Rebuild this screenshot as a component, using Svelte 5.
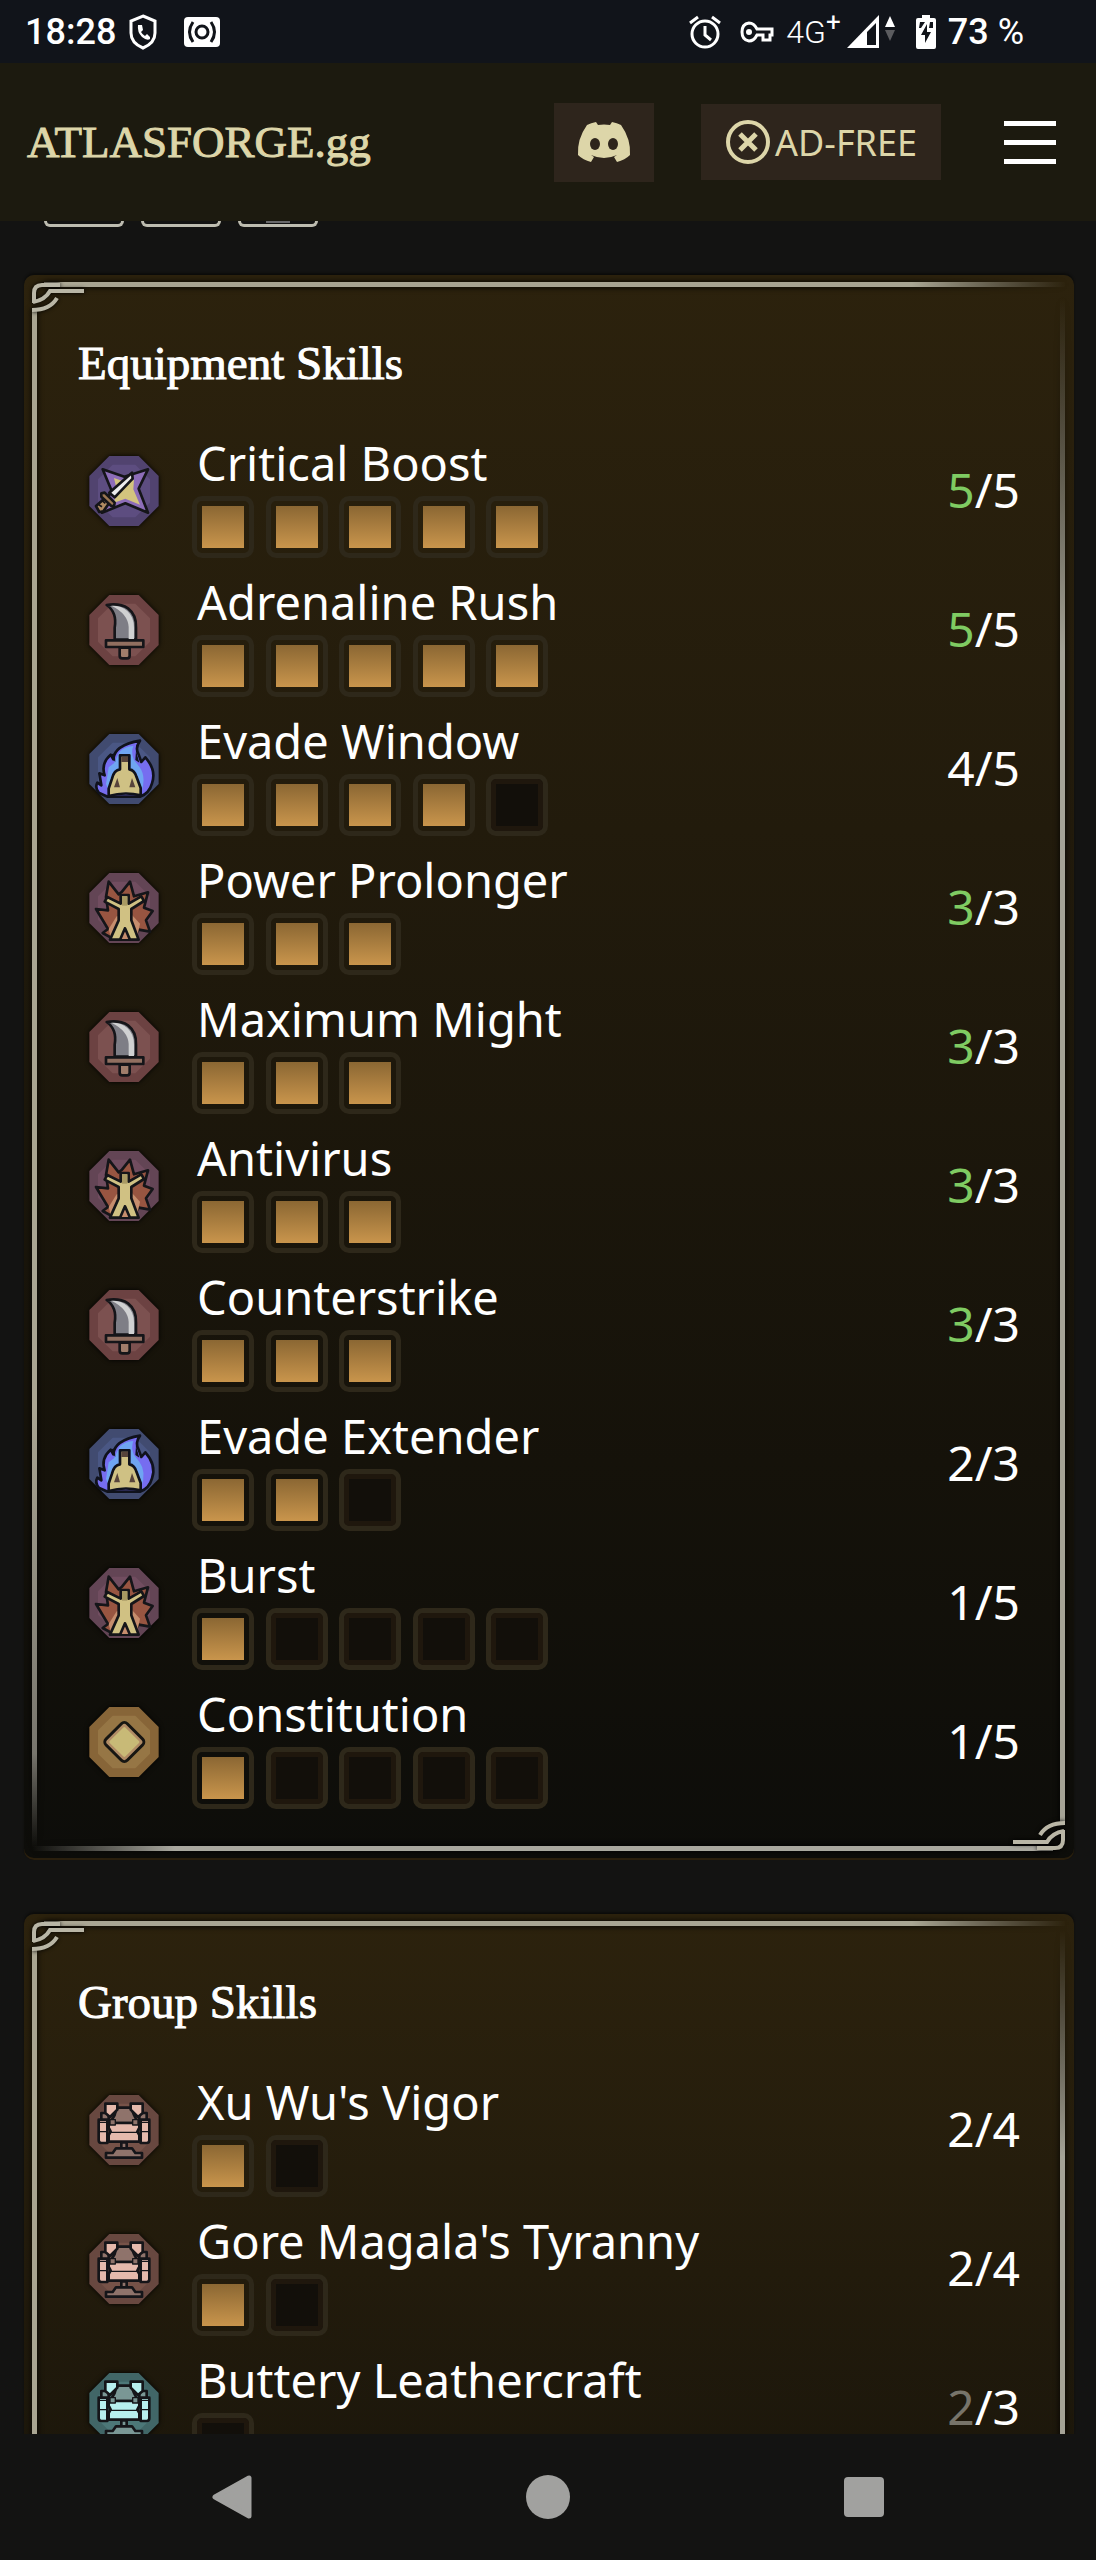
<script lang="ts">
  type Kind = 'crit' | 'blade' | 'evade' | 'power' | 'basic' | 'armor' | 'armor-teal';
  type Skill = { name: string; kind: Kind; level: number; max: number; pips: number; filled: number; dim?: boolean };

  const equipment: Skill[] = [
    { name: 'Critical Boost', kind: 'crit', level: 5, max: 5, pips: 5, filled: 5 },
    { name: 'Adrenaline Rush', kind: 'blade', level: 5, max: 5, pips: 5, filled: 5 },
    { name: 'Evade Window', kind: 'evade', level: 4, max: 5, pips: 5, filled: 4 },
    { name: 'Power Prolonger', kind: 'power', level: 3, max: 3, pips: 3, filled: 3 },
    { name: 'Maximum Might', kind: 'blade', level: 3, max: 3, pips: 3, filled: 3 },
    { name: 'Antivirus', kind: 'power', level: 3, max: 3, pips: 3, filled: 3 },
    { name: 'Counterstrike', kind: 'blade', level: 3, max: 3, pips: 3, filled: 3 },
    { name: 'Evade Extender', kind: 'evade', level: 2, max: 3, pips: 3, filled: 2 },
    { name: 'Burst', kind: 'power', level: 1, max: 5, pips: 5, filled: 1 },
    { name: 'Constitution', kind: 'basic', level: 1, max: 5, pips: 5, filled: 1 },
  ];

  // group skills light one pip per completed tier, not per piece
  const group: Skill[] = [
    { name: "Xu Wu's Vigor", kind: 'armor', level: 2, max: 4, pips: 2, filled: 1 },
    { name: "Gore Magala's Tyranny", kind: 'armor', level: 2, max: 4, pips: 2, filled: 1 },
    { name: 'Buttery Leathercraft', kind: 'armor-teal', level: 2, max: 3, pips: 1, filled: 0, dim: true },
  ];

  const plates: Record<Kind, [string, string]> = {
    crit: ['#51436f', '#5d4d80'],
    blade: ['#6c4242', '#7c5150'],
    evade: ['#414b70', '#4a5784'],
    power: ['#634555', '#714d60'],
    basic: ['#876538', '#967645'],
    armor: ['#684840', '#765248'],
    'armor-teal': ['#416667', '#4c7778'],
  };
</script>

{#snippet armor(light: string, mid: string)}
  <g stroke="#151519" stroke-width="8" stroke-linejoin="round">
    <path d="M82 38H126L134 60L146 84H62L76 60Z" fill={mid} />
    <path d="M36 54H58V78H36ZM150 54H172V78H150Z" fill={mid} />
    <path d="M48 26H84V44L62 66L48 54ZM160 26H124V44L146 66L160 54Z" fill={light} />
    <path d="M28 74H54V144H36Q28 144 28 136ZM180 74H154V144H172Q180 144 180 136Z" fill={light} />
    <path d="M58 84H150V98L144 110L150 120V140H58V120L64 110L58 98Z" fill={light} />
    <path d="M28 82H52M156 82H180M28 110H52M156 110H180M60 112H148" fill="none" stroke-width="4" />
    <path d="M62 74H78V90H62ZM130 74H146V90H130Z" fill={mid} stroke-width="4" />
    <path d="M96 142H112V164H96Z" fill={mid} />
    <path d="M50 188V174H70L80 160H128L138 174H158V188Z" fill={mid} />
  </g>
{/snippet}

{#snippet skillIcon(kind: Kind)}
  <svg class="icon" viewBox="-34 -33 276 276" aria-hidden="true">
    <path class="plate" d="M60 0H148L208 60V150L148 210H60L0 150V60Z" fill={plates[kind][0]} />
    <path d="M70 26H138L182 70V140L138 184H70L26 140V70Z" fill={plates[kind][1]} />
    {#if kind === 'crit'}
      <g stroke="#151519" stroke-width="8" stroke-linejoin="round">
        <path d="M40 40L105 62L176 40L148 98L176 170L108 142L38 170L66 102Z" fill="#8d6db8" />
        <path d="M74 66L108 78L134 72L132 100L152 146L108 128L74 140L82 100Z" fill="#d3c47e" stroke="none" />
        <path d="M128 50L130 68L76 124L60 110Z" fill="#ececec" />
        <path d="M54 120L66 132L42 166L30 168L20 150Z" fill="#b08b62" />
        <path d="M36 112L46 110L76 140L74 150L66 150L36 122Z" fill="#9b7652" />
        <path d="M28 146L38 152M38 134L48 142" fill="none" stroke-width="5" />
      </g>
    {:else if kind === 'blade'}
      <g stroke="#151519" stroke-width="8" stroke-linejoin="round">
        <path d="M52 30Q92 24 116 40Q142 60 140 98V134H76V98Q84 52 52 30Z" fill="#7e7e86" />
        <path d="M66 32Q98 32 114 48Q134 66 134 98V132H118V96Q116 56 66 32Z" fill="#d0d1d2" stroke="none" />
        <path d="M50 136H162V156H50Z" fill="#916f60" />
        <path d="M91 158H121V182Q121 190 113 190H99Q91 190 91 182Z" fill="#a07d6b" />
      </g>
    {:else if kind === 'evade'}
      <g stroke="#10121c" stroke-width="8" stroke-linejoin="round">
        <path d="M55 188L28 176Q16 160 24 146L36 154L30 118L46 124Q34 88 64 62L72 76Q74 34 152 20Q136 42 148 62L156 84L168 70Q202 108 188 148Q180 178 152 188Z" fill="#766df0" />
        <path d="M60 174L50 150L58 100L74 88L90 54Q106 38 132 36Q124 56 134 78L150 98Q172 128 156 174Z" fill="#6fa5f2" stroke="none" />
        <path d="M62 62L76 58L78 84ZM140 50L150 86L138 78Z" fill="#10121c" stroke="none" />
        <path d="M92 64H120V106Q136 108 142 130L154 162V184Q106 172 58 186V164L68 134Q74 108 92 106Z" fill="#cfc184" />
        <path d="M96 68H116V84H96ZM84 132L74 160H92ZM128 132L138 160H120Z" fill="#57443b" stroke="none" />
      </g>
    {:else if kind === 'power'}
      <g stroke="#151519" stroke-width="8" stroke-linejoin="round">
        <path d="M58 26L88 64L98 56L122 26L134 70L176 58L164 104L190 114L170 142L182 176L148 170L130 200H76L40 180L56 168L20 108L56 112L50 72Z" fill="#985541" />
        <path d="M66 198L58 168L82 130L128 126L152 152L142 198Z" fill="#c68d6d" stroke="none" />
        <path d="M94 66H118V92L156 70L164 84L126 108V142L148 200H122L107 166L92 200H62L88 142V108L46 86L54 72L94 92Z" fill="#d0c183" />
        <path d="M98 70H114V98H98Z" fill="#a99a63" stroke="none" />
      </g>
    {:else if kind === 'basic'}
      <path d="M105 59L151 105L105 151L59 105Z" fill="#83633f" stroke="#171612" stroke-width="34" stroke-linejoin="round" />
      <path d="M105 60L150 105L105 150L60 105Z" fill="#c8ba77" stroke="#b08b65" stroke-width="18" stroke-linejoin="round" />
      <path d="M105 64L146 105L105 146L64 105Z" fill="#c8ba77" stroke="#c8ba77" stroke-width="8" stroke-linejoin="round" />
    {:else if kind === 'armor'}
      {@render armor('#e5b9ac', '#8f736b')}
    {:else}
      {@render armor('#b7efee', '#7a9795')}
    {/if}
  </svg>
{/snippet}

{#snippet corner(pos: string)}
  <svg class="corner {pos}" viewBox="0 0 54 32" aria-hidden="true">
    <path d="M2 21V11Q2 3 10 3H28M1 20Q13 18 18 9H52M0 28Q18 28 25 16" fill="none" stroke="#b9b6a6" stroke-width="4" />
  </svg>
{/snippet}

{#snippet card(title: string, skills: Skill[], open: boolean)}
  <section class="card" class:open>
    {@render corner('tl')}
    {@render corner('br')}
    <h2>{title}</h2>
    <ul>
      {#each skills as s}
        <li>
          {@render skillIcon(s.kind)}
          <div class="body">
            <div class="name">{s.name}</div>
            <div class="pips">
              {#each Array(s.pips) as _, i}
                <span class="pip" class:on={i < s.filled}></span>
              {/each}
            </div>
          </div>
          <div class="score"><span class:full={s.level === s.max} class:dim={s.dim}>{s.level}</span>/{s.max}</div>
        </li>
      {/each}
    </ul>
  </section>
{/snippet}

<div class="screen">
  <div class="status">
    <div class="side">
      <span class="clock">18:28</span>
      <svg class="shield" width="28" height="36" viewBox="0 0 28 36">
        <path d="M14 2L26 7V19Q26 29 14 34Q2 29 2 19V7Z" fill="none" stroke="#fff" stroke-width="3" />
        <path d="M9 11L13 11L14 16L12 18Q13 20 16 22L18 20L21 23V25Q18 27 13 23Q8 18 9 11Z" fill="#fff" />
      </svg>
      <svg width="36" height="30" viewBox="0 0 36 30">
        <rect width="36" height="30" rx="4" fill="#fff" />
        <g fill="none" stroke="#11141a" stroke-width="3">
          <circle cx="18" cy="15" r="6" />
          <path d="M9 5Q2 15 9 25M27 5Q34 15 27 25" />
        </g>
      </svg>
    </div>
    <div class="side right">
      <svg class="alarm" width="32" height="34" viewBox="0 0 32 34">
        <g fill="none" stroke="#fff" stroke-width="3">
          <circle cx="16" cy="19" r="13" />
          <path d="M1 8L9 2M31 8L23 2M16 11V20L22 25" />
        </g>
      </svg>
      <svg class="key" width="34" height="22" viewBox="0 0 34 22">
        <path d="M17 8H32V14H30V19H23V14H17Q14 20 9 20Q2 19 2 11Q2 3 9 2Q14 2 17 8Z" fill="none" stroke="#fff" stroke-width="3" />
        <circle cx="9" cy="11" r="3" fill="#fff" />
      </svg>
      <span class="net">4G<sup>+</sup></span>
      <svg class="signal" width="50" height="34" viewBox="0 0 50 34">
        <path d="M0 33L32 0V33Z" fill="#fff" />
        <path d="M20 17L29 8V30H20Z" fill="#11141a" />
        <path d="M38 12L43 1L48 12Z" fill="#fff" />
        <path d="M38 15L43 26L48 15Z" fill="#5b5c5f" />
      </svg>
      <svg class="battery" width="20" height="34" viewBox="0 0 20 34">
        <path d="M6 0H14V3H18Q20 3 20 5V32Q20 34 18 34H2Q0 34 0 32V5Q0 3 2 3H6Z" fill="#fff" />
        <path d="M4 7H9L5 13H3ZM14 7H17V13H13Z M11 9L5 20H9V28L15 17H11Z" fill="#11141a" />
      </svg>
      <span class="clock">73 <span class="pct">%</span></span>
    </div>
  </div>

  <header>
    <a class="brand" href="/">ATLASFORGE.gg</a>
    <nav>
      <a class="chip discord" href="/discord" aria-label="Discord">
        <svg width="54" height="42" viewBox="0 0 54 42">
          <path d="M10 4Q14 2 19 1L21 4Q27 3 33 4L35 1Q40 2 44 4Q54 18 53 34Q48 39 40 41L37 36L40 34Q27 40 14 34L17 36L14 41Q6 39 1 34Q0 18 10 4Z" fill="#ddd6a9" />
          <ellipse cx="18" cy="23" rx="5" ry="6" fill="#2e251c" />
          <ellipse cx="36" cy="23" rx="5" ry="6" fill="#2e251c" />
        </svg>
      </a>
      <a class="chip adfree" href="/ad-free">
        <svg width="44" height="44" viewBox="0 0 44 44">
          <circle cx="22" cy="22" r="20" fill="none" stroke="#ddd6a9" stroke-width="4" />
          <path d="M14 14L30 30M30 14L14 30" stroke="#ddd6a9" stroke-width="5" />
        </svg>
        AD-FREE
      </a>
      <button class="menu" aria-label="Menu"><i></i><i></i><i></i></button>
    </nav>
  </header>

  <main>
    <div class="slots">
      <span class="slot"></span>
      <span class="slot"></span>
      <span class="slot"><i></i></span>
    </div>
    {@render card('Equipment Skills', equipment, false)}
    {@render card('Group Skills', group, true)}
  </main>

  <footer>
    <button aria-label="Back">
      <svg width="46" height="46" viewBox="0 0 46 46"><path d="M40 4V42L6 23Z" fill="#a1a19f" stroke="#a1a19f" stroke-width="5" stroke-linejoin="round" /></svg>
    </button>
    <button aria-label="Home">
      <svg width="46" height="46" viewBox="0 0 46 46"><circle cx="23" cy="23" r="22" fill="#a1a19f" /></svg>
    </button>
    <button aria-label="Recents">
      <svg width="46" height="46" viewBox="0 0 46 46"><rect x="3" y="3" width="40" height="40" rx="4" fill="#a1a19f" /></svg>
    </button>
  </footer>
</div>

<style>
  :global(body) { margin: 0; background: #131312; }
  .screen { display: flex; flex-direction: column; height: 100vh; overflow: hidden; background: #131312; color: #fff; font-family: 'Noto Sans', sans-serif; }
  svg { display: block; flex: none; }
  button { background: none; border: 0; padding: 0; cursor: pointer; }

  .status { flex: none; display: flex; justify-content: space-between; align-items: center; height: 63px; padding: 0 72px 0 25px; background: #11141a; font-family: Roboto, sans-serif; }
  .side { display: flex; align-items: center; }
  .clock { font-size: 36px; font-weight: 500; line-height: 42px; white-space: pre; }
  .pct { font-weight: 400; }
  .shield { margin: 0 27px 0 13px; }
  .alarm { margin-right: 19px; }
  .key { margin-right: 12px; }
  .net { font-size: 32px; font-weight: 300; line-height: 36px; }
  .net sup { font-size: 26px; font-weight: 400; line-height: 0; }
  .signal { margin: 0 19px 0 6px; }
  .battery { margin-right: 12px; }

  header { flex: none; display: flex; justify-content: space-between; align-items: center; height: 158px; padding: 0 40px 0 27px; background: #1c1a0f; }
  .brand { font: 45px 'Liberation Serif', serif; color: #ddd6a9; text-decoration: none; -webkit-text-stroke: 1px; }
  nav { display: flex; align-items: center; }
  .chip { display: flex; align-items: center; justify-content: center; box-sizing: border-box; background: #2e251c; color: #ddd6a9; font-size: 36px; text-decoration: none; }
  .discord { width: 100px; height: 79px; margin-right: 47px; }
  .adfree { height: 76px; padding: 0 24px 0 25px; gap: 5px; margin-right: 63px; }
  .menu { display: flex; flex-direction: column; gap: 14px; }
  .menu i { width: 52px; height: 5px; background: #fff; }

  main { flex: 1; min-height: 0; overflow: hidden; padding: 0 22px 0 24px; }
  .slots { display: flex; gap: 17px; padding-left: 20px; margin-bottom: 48px; }
  .slot { display: flex; justify-content: center; box-sizing: border-box; width: 80px; height: 6px; border: 3px solid #bdbcb0; border-top: 0; border-radius: 0 0 10px 10px; }
  .slot i { width: 24px; height: 2px; background: #68686a; }

  .card { position: relative; margin-bottom: 54px; padding: 56px 54px 51px; border-radius: 10px; background: linear-gradient(#2c220d, #221b0c 35%, #15120a 75%, #0d0d0a); box-shadow: inset 0 -2px #2a1f0d, 0 -2px 2px #0c0c0b; }
  .open { min-height: 920px; }
  .card::before {
    content: '';
    position: absolute;
    inset: 7px 9px 9px 8px;
    background:
      linear-gradient(90deg, #aaa693 84%, transparent 99%) 12px 0 / 100% 5px no-repeat,
      linear-gradient(transparent 1%, #a5a396 24%) 100% 0 / 5px calc(100% - 28px) no-repeat,
      linear-gradient(90deg, transparent, #a9a89f 14%) 0 100% / calc(100% - 12px) 5px no-repeat,
      linear-gradient(#a9a592 70%, #77756d 92%, transparent 98%) 0 28px / 5px 100% no-repeat;
    filter: drop-shadow(0 0 3px #000);
  }
  .corner { position: absolute; width: 54px; height: 32px; filter: drop-shadow(0 0 2px #000); }
  .tl { top: 7px; left: 8px; }
  .br { right: 9px; bottom: 9px; transform: rotate(180deg); }

  h2 { margin: 0 0 36px; font: 47px/64px 'Liberation Serif', serif; -webkit-text-stroke: 1px; }
  ul { display: flex; flex-direction: column; gap: 12px; margin: 0; padding: 0; list-style: none; }
  li { display: flex; align-items: center; font-size: 48px; line-height: 48px; }
  .icon { width: 92px; height: 92px; margin: 0 22px 8px 0; }
  .plate { filter: drop-shadow(0 0 8px #000); }
  .body { flex: 1; }
  .name { padding-left: 5px; font-size: 47px; line-height: 65px; }
  .pips { display: grid; grid-template-columns: repeat(5, 62px); justify-content: space-between; width: 356px; }
  .pip { box-sizing: border-box; height: 62px; border: 5px solid #2e281a; border-radius: 10px; background: #120f0a; box-shadow: inset 0 0 0 5px #1f170d; }
  .pip.on { background: linear-gradient(#8b6733, #c9954c) content-box #1f170d; padding: 5px; box-shadow: none; }
  .score { margin-bottom: 10px; }
  .full { color: #7fcb62; }
  .dim { color: #77746a; }

  footer { flex: none; display: flex; justify-content: space-between; align-items: center; height: 126px; padding: 0 209px; background: #131312; }
</style>
